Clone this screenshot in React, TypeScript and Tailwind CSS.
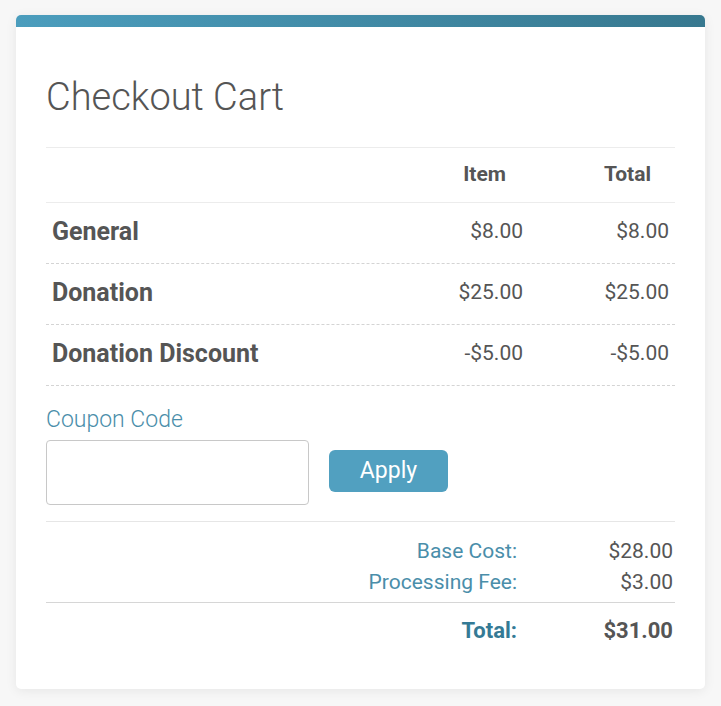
const rows = [
  { name: "General", item: "$8.00", total: "$8.00" },
  { name: "Donation", item: "$25.00", total: "$25.00" },
  { name: "Donation Discount", item: "-$5.00", total: "-$5.00" },
];

export default function App() {
  return (
    <div
      className="min-h-screen bg-[#f7f7f7] pt-[15px] pl-[16px] text-[#555]"
      style={{ fontFamily: "Roboto, 'Liberation Sans', sans-serif" }}
    >
      <div className="w-[689px] overflow-hidden rounded-[5px] bg-white shadow-[0_2px_12px_rgba(0,0,0,0.07)]">
        <div className="h-[12px] bg-gradient-to-r from-[#4b9dbd] to-[#37788f]" />

        <div className="px-[30px] pb-[32px]">
          <h1 className="mt-[49px] text-[38px] font-light leading-[43px] text-[#555]">Checkout Cart</h1>

          {/* cart table */}
          <div className="mt-[28px] border-t border-[#ececec]">
            <div className="grid h-[55px] grid-cols-[1fr_160px_146px] items-center border-b border-[#ececec] text-[21px] font-bold text-[#555]">
              <div />
              <div className="pr-[23px] text-right">Item</div>
              <div className="pr-[24px] text-right">Total</div>
            </div>
            {rows.map((r) => (
              <div
                key={r.name}
                className="grid h-[61px] grid-cols-[1fr_160px_146px] items-center border-b border-dashed border-[#d4d4d4] pb-[3px]"
              >
                <div className="pl-[6px] text-[25px] font-bold text-[#555]">{r.name}</div>
                <div className="pr-[6px] text-right text-[21px] text-[#555]">{r.item}</div>
                <div className="pr-[6px] text-right text-[21px] text-[#555]">{r.total}</div>
              </div>
            ))}
          </div>

          {/* coupon */}
          <div className="mt-[22px] text-[23px] font-light leading-[24px] text-[#4a8eaa]">Coupon Code</div>
          <div className="mt-[8px] flex items-start gap-[20px]">
            <input
              type="text"
              className="h-[65px] w-[263px] rounded-[4px] border border-[#c8c8c8] bg-white px-3 text-[20px] outline-none"
            />
            <button
              type="button"
              className="mt-[10px] h-[42px] w-[119px] rounded-[6px] bg-[#51a0c0] text-[23px] text-white"
            >
              Apply
            </button>
          </div>

          {/* summary */}
          <div className="mt-[16px] border-t border-[#e6e6e6] pt-[14px]">
            <div className="flex h-[31px] items-center justify-end text-[21px]">
              <span className="text-[#4a8eaa]">Base Cost:</span>
              <span className="w-[158px] pr-[2px] text-right text-[#555]">$28.00</span>
            </div>
            <div className="flex h-[31px] items-center justify-end text-[21px]">
              <span className="text-[#4a8eaa]">Processing Fee:</span>
              <span className="w-[158px] pr-[2px] text-right text-[#555]">$3.00</span>
            </div>
            <div className="mt-[4px] flex h-[55px] items-center justify-end border-t border-[#d6d6d6] text-[22px] font-bold">
              <span className="text-[#347a95]">Total:</span>
              <span className="w-[158px] pr-[2px] text-right text-[#555]">$31.00</span>
            </div>
          </div>
        </div>
      </div>
    </div>
  );
}
